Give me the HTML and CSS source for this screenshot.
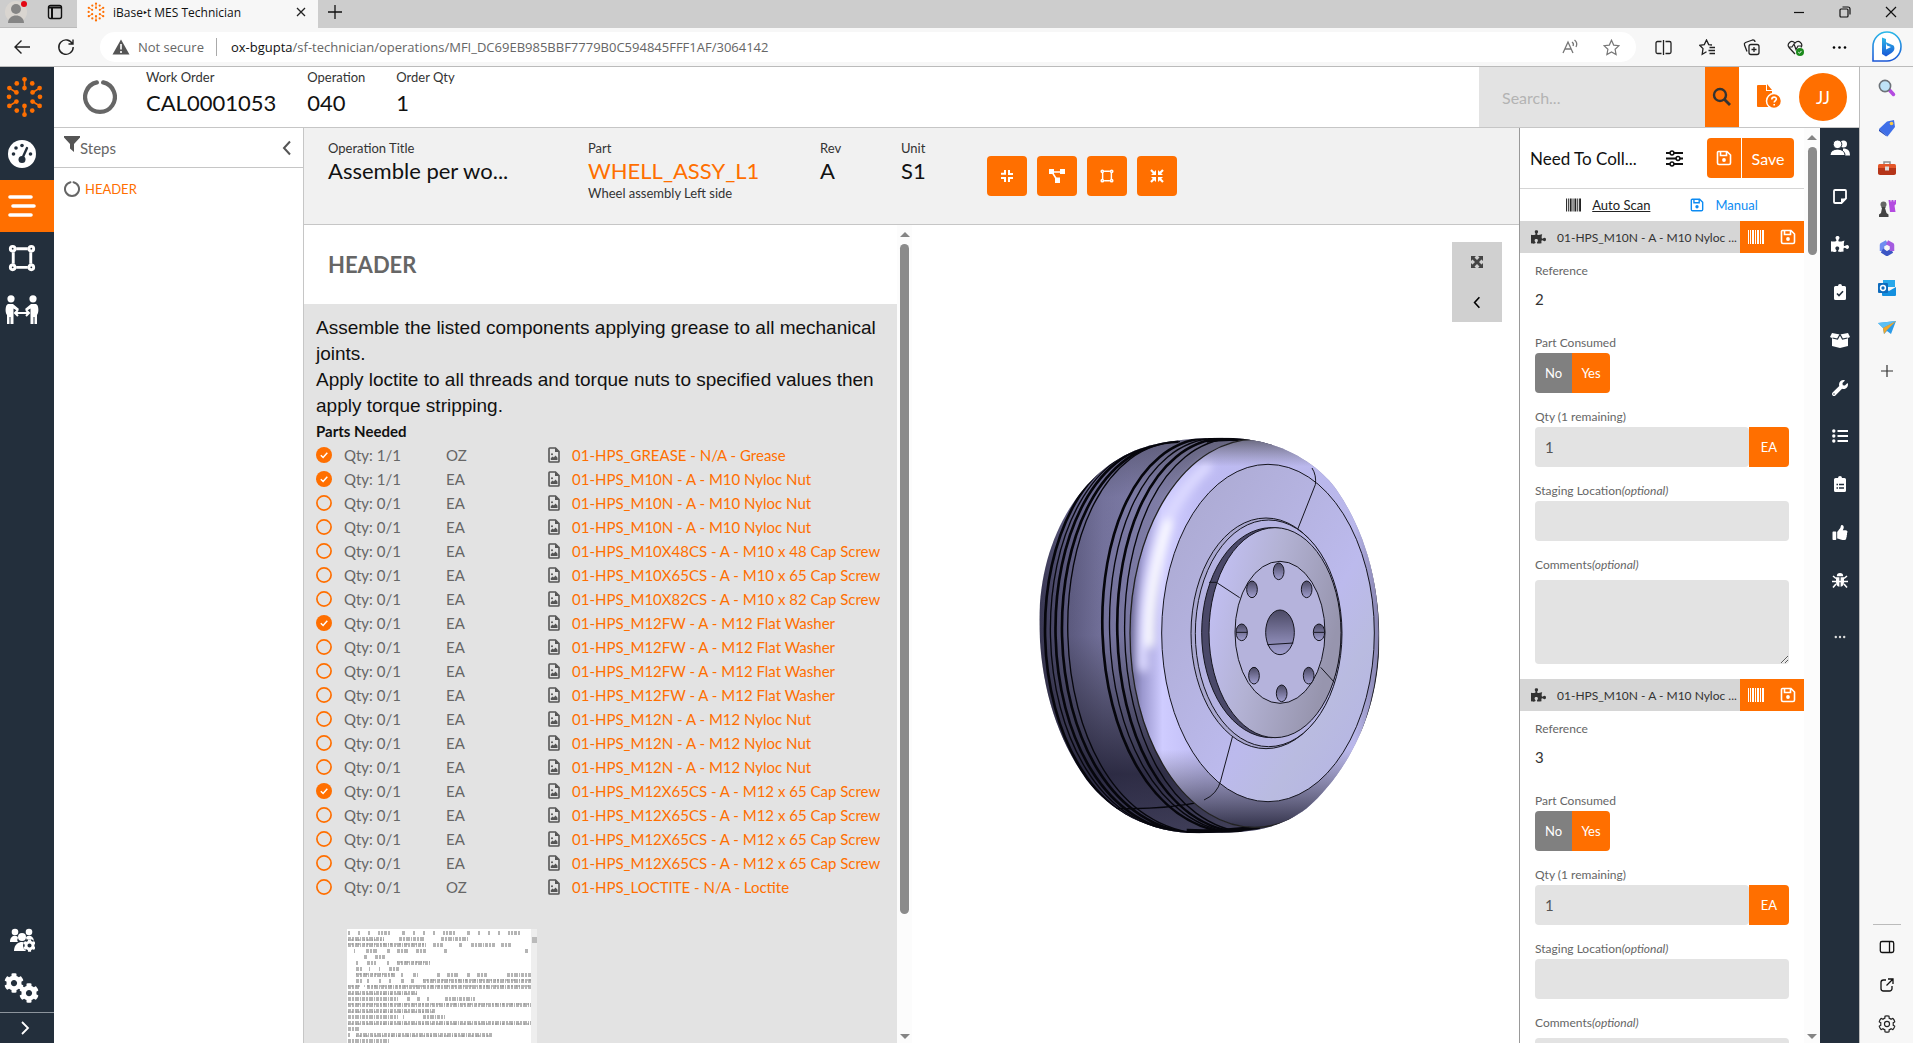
FILE: index.html
```html
<!DOCTYPE html>
<html lang="en">
<head>
<meta charset="utf-8">
<title>iBase-t MES Technician</title>
<link rel="stylesheet" href="styles.css">
</head>
<body>
<svg class="sprite" aria-hidden="true">
  <symbol id="logo" viewBox="17 26 110 125"><g stroke="#ff6f00" stroke-width="5" fill="#ff6f00"><path d="M72 36v26M72 115v26M27 62l21 13M117 62L96 75M27 115l21-13M117 115l-21-13"/><g stroke="none"><circle cx="72" cy="36" r="7"/><circle cx="72" cy="62" r="7"/><circle cx="72" cy="115" r="7"/><circle cx="72" cy="141" r="7"/><circle cx="27" cy="62" r="7"/><circle cx="48" cy="75" r="7"/><circle cx="117" cy="62" r="7"/><circle cx="96" cy="75" r="7"/><circle cx="27" cy="115" r="7"/><circle cx="48" cy="102" r="7"/><circle cx="117" cy="115" r="7"/><circle cx="96" cy="102" r="7"/><circle cx="49" cy="48" r="7"/><circle cx="95" cy="48" r="7"/><circle cx="49" cy="129" r="7"/><circle cx="95" cy="129" r="7"/><circle cx="26" cy="88" r="7"/><circle cx="118" cy="88" r="7"/></g></g></symbol>
  <symbol id="ring" viewBox="0 0 32 32"><path d="M13 2.300A14 14 0 1 0 19 2.300" fill="none" stroke="#666" stroke-width="4" stroke-linecap="round"/></symbol>
  <symbol id="gear" viewBox="0 0 512 512"><path fill="currentColor" d="M487.400 315.700l-42.600-24.600c4.300-23.200 4.300-47 0-70.200l42.600-24.600c4.900-2.800 7.100-8.600 5.500-14-11.100-35.600-30-67.800-54.700-94.600-3.800-4.100-10-5.100-14.800-2.300L380.800 110c-17.900-15.400-38.500-27.300-60.800-35.100V25.800c0-5.600-3.900-10.500-9.400-11.700-36.700-8.200-74.300-7.800-109.200 0-5.500 1.200-9.400 6.100-9.400 11.700V75c-22.200 7.900-42.800 19.800-60.800 35.100L88.700 85.500c-4.900-2.800-11-1.900-14.800 2.300-24.700 26.700-43.600 58.900-54.700 94.600-1.700 5.400.6 11.200 5.500 14L67.300 221c-4.300 23.200-4.300 47 0 70.200l-42.600 24.600c-4.900 2.800-7.100 8.600-5.500 14 11.100 35.600 30 67.800 54.700 94.600 3.800 4.100 10 5.100 14.800 2.300l42.600-24.600c17.900 15.400 38.500 27.300 60.800 35.100v49.200c0 5.600 3.900 10.500 9.400 11.700 36.700 8.200 74.300 7.800 109.200 0 5.500-1.200 9.400-6.100 9.400-11.700v-49.200c22.200-7.900 42.800-19.800 60.800-35.100l42.600 24.600c4.900 2.800 11 1.900 14.800-2.300 24.700-26.700 43.600-58.900 54.700-94.600 1.500-5.500-.7-11.300-5.600-14.100zM256 336c-44.100 0-80-35.900-80-80s35.900-80 80-80 80 35.900 80 80-35.900 80-80 80z"/></symbol>
  <symbol id="puzzle" viewBox="0 0 576 512"><path fill="currentColor" d="M519.442 288.651c-41.519 0-59.5 31.593-82.058 31.593C377.409 320.244 432 144 432 144s-196.288 80-196.288-3.297c0-35.827 36.288-46.25 36.288-85.985C272 19.216 243.885 0 210.539 0c-34.654 0-66.366 18.891-66.366 56.346 0 41.364 31.711 59.277 31.711 81.75C175.885 207.719 0 166.758 0 166.758v333.237s178.635 41.047 178.635-28.662c0-22.473-40-40.107-40-81.471 0-37.456 29.25-56.346 63.577-56.346 33.673 0 61.788 19.216 61.788 54.717 0 39.735-36.288 50.158-36.288 85.985 0 60.803 129.675 25.73 181.23 25.73 0 0-34.725-120.101 25.827-120.101 35.962 0 46.423 36.152 86.308 36.152C556.712 416 576 387.99 576 354.443c0-34.199-18.962-65.792-56.558-65.792z"/></symbol>
  <symbol id="frame" viewBox="0 0 24 24"><g fill="none" stroke="currentColor" stroke-width="2.500"><path d="M7 4h10M7 20h10M4.500 7v10M19.500 7v10"/><circle cx="4" cy="4" r="2"/><circle cx="20" cy="4" r="2"/><circle cx="4" cy="20" r="2"/><circle cx="20" cy="20" r="2"/></g></symbol>
  <symbol id="save" viewBox="0 0 16 16"><path d="M2.500 1.500h8.500L14.500 5v8a1.500 1.500 0 0 1-1.500 1.500H3A1.500 1.500 0 0 1 1.500 13V2.500a1 1 0 0 1 1-1zM4.500 2v3.500h6V2" fill="none" stroke="currentColor" stroke-width="1.600"/><circle cx="8" cy="10" r="1.900" fill="currentColor"/></symbol>
  <symbol id="barcode" viewBox="0 0 16 14"><path fill="currentColor" d="M0 0h1v14H0zM2 0h1v14H2zM4 0h2v14H4zM7 0h1v14H7zM9 0h2v14H9zM12 0h1v14h-1zM14 0h2v14h-2z"/></symbol>
  <symbol id="left" viewBox="0 0 10 16"><path d="M8 1.500L2 8l6 6.500" fill="none" stroke="currentColor" stroke-width="2"/></symbol>
  <symbol id="done" viewBox="0 0 16 16"><circle cx="8" cy="8" r="8" fill="#ff6f00"/><path d="M4.800 8.200l2.300 2.300 4.200-4.700" fill="none" stroke="#fff" stroke-width="1.500"/></symbol>
  <symbol id="open" viewBox="0 0 16 16"><circle cx="8" cy="8" r="7.100" fill="none" stroke="#ff6f00" stroke-width="1.700"/></symbol>
  <symbol id="file" viewBox="0 0 12 16"><path d="M1.800 1h5.700L11 4.500v9.700a.8.800 0 0 1-.8.800H1.800a.8.800 0 0 1-.8-.8V1.800A.8.800 0 0 1 1.800 1z" fill="none" stroke="#555" stroke-width="1.600"/><path d="M7 1v4h4zM2.800 13v-2l2-1.500 1 1L7.500 8.500l2 2.200V13z" fill="#555"/><circle cx="4" cy="7.200" r="1" fill="#555"/></symbol>
</svg>

<header class="tabs">
  <div class="tabs-left">
    <svg width="22" height="24" viewBox="0 0 22 24"><circle cx="11" cy="12" r="11" fill="#d9d5d0"/><circle cx="11" cy="9" r="5" fill="#858585"/><path d="M3 23c0-10 16-10 16 0z" fill="#858585"/><circle cx="19" cy="4" r="3" fill="#e30613"/></svg>
    <svg width="16" height="16" viewBox="0 0 16 16"><rect x="1.500" y="1.500" width="13" height="13" rx="2" fill="none" stroke="#111" stroke-width="1.400"/><path d="M1.500 3.500h13M5 4v11" stroke="#111" stroke-width="2"/></svg>
  </div>
  <div class="tab">
    <svg width="18" height="20"><use href="#logo"/></svg>
    <span class="tab-name">iBase‣t MES Technician</span>
    <svg width="10" height="10" viewBox="0 0 10 10"><path d="M1 1l8 8M9 1L1 9" stroke="#222" stroke-width="1.300"/></svg>
  </div>
  <button class="plain new-tab" aria-label="New tab"><svg width="14" height="14" viewBox="0 0 14 14"><path d="M7 0v14M0 7h14" stroke="#111" stroke-width="1.300"/></svg></button>
  <div class="window-buttons">
    <svg width="12" height="12" viewBox="0 0 12 12"><path d="M1 6.500h10" stroke="#111" stroke-width="1.200"/></svg>
    <svg width="12" height="12" viewBox="0 0 12 12"><path d="M1 4a1 1 0 0 1 1-1h6a1 1 0 0 1 1 1v6a1 1 0 0 1-1 1H2a1 1 0 0 1-1-1zM3.500 1H9a2 2 0 0 1 2 2v5.500" fill="none" stroke="#111" stroke-width="1.200"/></svg>
    <svg width="12" height="12" viewBox="0 0 12 12"><path d="M1 1l10 10M11 1L1 11" stroke="#111" stroke-width="1.200"/></svg>
  </div>
</header>

<div class="toolbar">
  <button class="plain" aria-label="Back"><svg width="18" height="16" viewBox="0 0 18 16"><path d="M17 8H2M8.500 1.500L2 8l6.500 6.500" fill="none" stroke="#222" stroke-width="1.400"/></svg></button>
  <button class="plain" aria-label="Reload"><svg width="18" height="18" viewBox="0 0 18 18"><path d="M15.500 6A7.200 7.200 0 1 0 16.200 9M16 1.500V6h-4.500" fill="none" stroke="#222" stroke-width="1.400"/></svg></button>
  <div class="address">
    <svg width="18" height="16" viewBox="0 0 18 16"><path d="M9 .5L17.500 15.500H.5z" fill="#555"/><path d="M9 5v5.500M9 12v2" stroke="#fff" stroke-width="1.600"/></svg>
    <span class="insecure">Not secure</span>
    <span class="url"><b>ox-bgupta</b>/sf-technician/operations/MFI_DC69EB985BBF7779B0C594845FFF1AF/3064142</span>
    <svg width="17" height="16" viewBox="0 0 17 16"><path d="M1 14L6 3l5 11M3 10h6M10 3c1.500 1 1.500 3 1 4M12.500 1c2.500 2 2.500 5 1.500 7" fill="none" stroke="#777" stroke-width="1.300"/></svg>
    <svg width="17" height="17" viewBox="0 0 17 17"><path d="M8.500 1.200l2.200 4.900 5.300.6-3.900 3.600 1 5.300-4.600-2.700-4.600 2.700 1-5.300L1 6.700l5.300-.6z" fill="none" stroke="#777" stroke-width="1.200"/></svg>
  </div>
  <div class="browser-icons">
    <svg width="17" height="17" viewBox="0 0 17 17"><path d="M6.500 2.500H2.500a1.500 1.500 0 0 0-1.500 1.500v9a1.500 1.500 0 0 0 1.500 1.500h4M10.500 2.500h4A1.500 1.500 0 0 1 16 4v9a1.500 1.500 0 0 1-1.500 1.500h-4M8.500 1v15" fill="none" stroke="#222" stroke-width="1.300"/></svg>
    <svg width="17" height="17" viewBox="0 0 17 17"><path d="M13 6l-3.300-.4L7.500 1 5.300 5.600.8 6.300 4 9.600l-.8 5.600 4.300-2.400M10.500 8.500H16M9.500 11.500H16M10.500 14.500H16" fill="none" stroke="#222" stroke-width="1.300"/></svg>
    <svg width="17" height="17" viewBox="0 0 17 17"><rect x="6" y="5.500" width="10" height="10" rx="2" fill="none" stroke="#222" stroke-width="1.300"/><path d="M11 8v5M8.500 10.500h5M4 12.500L1.500 6a2 2 0 0 1 1-2.500L9.500 1a2 2 0 0 1 2.500 2" fill="none" stroke="#222" stroke-width="1.300"/></svg>
    <svg width="17" height="17" viewBox="0 0 17 17"><path d="M8 15L2 8.500C-.5 5 4 0 8 4c4-4 8.500 1 6 4.500M2 8h3l2-3 2 5.500L11 7h4" fill="none" stroke="#222" stroke-width="1.200"/><circle cx="13" cy="13" r="4" fill="#1b8a1b"/><path d="M11.300 13.200l1.200 1 2-2.300" fill="none" stroke="#fff"/></svg>
    <svg width="17" height="17" viewBox="0 0 17 17"><circle cx="3" cy="8.500" r="1.300"/><circle cx="8.500" cy="8.500" r="1.300"/><circle cx="14" cy="8.500" r="1.300"/></svg>
  </div>
  <div class="bing"><svg width="32" height="32" viewBox="0 0 32 32"><defs><linearGradient id="bg" x2="0" y2="1"><stop offset="0" stop-color="#2bb8e8"/><stop offset="1" stop-color="#1a56d6"/></linearGradient></defs><path d="M2 30V15.500A14 14.500 0 1 1 16 30z" fill="#fff" stroke="url(#bg)" stroke-width="1.600"/><path d="M11 6.500l4 1.500v10.500l5-2.500-4-1.500-1.500-3.500 8 3.500c2 3 .5 6-2 7.500l-5.500 3.500-4-2.500z" fill="url(#bg)"/></svg></div>
</div>

<div class="stage">
  <div class="app">
    <nav class="rail" aria-label="Main">
      <a href="#" class="rail-logo" aria-label="Home"><svg width="37" height="42"><use href="#logo"/></svg></a>
      <a href="#" class="rail-link" aria-label="Dashboard"><svg width="28" height="28" viewBox="0 0 28 28"><circle cx="14" cy="14" r="14" fill="#fff"/><g fill="#232f3c"><circle cx="5.500" cy="14" r="1.800"/><circle cx="8" cy="8" r="1.800"/><circle cx="14" cy="5.500" r="1.800"/><circle cx="22.500" cy="14" r="1.800"/><circle cx="14" cy="19.500" r="3.500"/></g><path d="M14 19l5-11" stroke="#232f3c" stroke-width="2.400" stroke-linecap="round"/></svg></a>
      <a href="#" class="rail-link active" aria-label="Operations"><svg width="28" height="24" viewBox="0 0 28 24"><path d="M2 3h21M5 12h21M2 21h21" stroke="#fff" stroke-width="3.600" stroke-linecap="round"/></svg></a>
      <a href="#" class="rail-link" aria-label="Units"><svg width="28" height="28"><use href="#frame"/></svg></a>
      <a href="#" class="rail-link" aria-label="Handover"><svg width="34" height="30" viewBox="0 0 34 30" fill="#fff"><circle cx="6" cy="3.800" r="3.600"/><circle cx="28" cy="3.800" r="3.600"/><path d="M3 9h5l6 5-1.500 2-4-2.500V29H5.500v-7H4.500v7H2V20C0 18 0 10 3 9zM31 9h-5l-6 5 1.500 2 4-2.500V29h3v-7h1v7H32V20c2-2 2-10-1-11z"/><path d="M11 18h12M13 15l-3 3 3 3M21 15l3 3-3 3" fill="none" stroke="#fff" stroke-width="2"/></svg></a>
      <span class="grow"></span>
      <a href="#" class="rail-link rail-low" aria-label="Teams"><svg width="26" height="24" viewBox="0 0 26 24" fill="#fff"><circle cx="6" cy="4" r="3.300"/><circle cx="20" cy="4" r="3.300"/><circle cx="13" cy="9" r="4"/><path d="M1 14c0-8 8-7 8-4-1 1-1 3 0 4zM25 14c0-8-8-7-8-4 1 1 1 3 0 4z"/><path d="M5 23c0-11 12-10 12-7v7z"/><svg x="14" y="11" width="13" height="13"><circle cx="6.500" cy="6.500" r="6.500" fill="#232f3c"/><g color="#fff"><use href="#gear" width="13" height="13"/></g></svg></svg></a>
      <a href="#" class="rail-link rail-low" aria-label="Settings"><svg width="36" height="30" viewBox="0 0 36 30" color="#fff"><use href="#gear" width="20" height="20"/><use href="#gear" x="15" y="10" width="20" height="20"/></svg></a>
      <button class="plain rail-toggle" aria-label="Expand"><svg width="10" height="14" viewBox="0 0 10 14"><path d="M2 1l6 6-6 6" fill="none" stroke="#fff" stroke-width="1.800"/></svg></button>
    </nav>

    <div class="work">
      <header class="order">
        <svg class="order-state" width="34" height="34"><use href="#ring"/></svg>
        <dl class="facts order-facts">
          <div><dt>Work Order</dt><dd>CAL0001053</dd></div>
          <div><dt>Operation</dt><dd>040</dd></div>
          <div><dt>Order Qty</dt><dd>1</dd></div>
        </dl>
        <form class="search">
          <input type="search" placeholder="Search..." aria-label="Search">
          <button type="button" aria-label="Search"><svg width="20" height="20" viewBox="0 0 20 20"><circle cx="8" cy="8" r="6" fill="none" stroke="#333" stroke-width="2.400"/><path d="M12.500 12.500L18 18" stroke="#333" stroke-width="2.800"/></svg></button>
        </form>
        <a href="#" class="help" aria-label="Help"><svg width="26" height="26" viewBox="0 0 26 26"><path d="M2 1h8v6h6v15a1 1 0 0 1-1 1H2a1 1 0 0 1-1-1V2a1 1 0 0 1 1-1zM11 0l5 6h-5z" fill="#ff6f00"/><circle cx="18" cy="17" r="7.500" fill="#ff6f00" stroke="#fff" stroke-width="1.500"/><path d="M15.800 15.500c0-3.300 4.700-3 4.600-.4 0 1.500-2.200 1.500-2.200 3.400M18.200 20v1.500" fill="none" stroke="#fff" stroke-width="1.600"/></svg></a>
        <button class="avatar">JJ</button>
      </header>

      <div class="columns">
        <aside class="steps">
          <div class="steps-head">
            <svg width="16" height="16" viewBox="0 0 16 16"><path d="M0 0h16v1.500L10 8v8l-4-3.500V8L0 1.500z" fill="#555"/></svg>
            <span>Steps</span>
            <button class="plain" aria-label="Collapse"><svg width="10" height="18"><use href="#left"/></svg></button>
          </div>
          <a href="#" class="step"><svg width="16" height="16"><use href="#ring"/></svg>HEADER</a>
        </aside>

        <main class="operation">
          <div class="op-head">
            <dl class="facts op-facts">
              <div><dt>Operation Title</dt><dd>Assemble per wo...</dd></div>
              <div><dt>Part</dt><dd><a href="#">WHELL_ASSY_L1</a></dd><dd class="note">Wheel assembly Left side</dd></div>
              <div><dt>Rev</dt><dd>A</dd></div>
              <div><dt>Unit</dt><dd>S1</dd></div>
            </dl>
            <div class="actions">
              <button aria-label="Compress"><svg width="12" height="12" viewBox="0 0 12 12"><path d="M0 3.800h4V0M8 0v4h4M0 8h4v4M8 12V8h4" fill="none" stroke="#fff" stroke-width="2"/></svg></button>
              <button aria-label="Flow"><svg width="16" height="14" viewBox="0 0 16 14"><path d="M3 3h10M3 3l5 8" stroke="#fff" stroke-width="1.500"/><path d="M0 0h5v5H0zM11 0h5v5h-5zM6 8.500h5V14H6z" fill="#fff"/></svg></button>
              <button aria-label="Units"><svg width="14" height="14"><use href="#frame"/></svg></button>
              <button aria-label="Collapse all"><svg width="14" height="14" viewBox="0 0 14 14"><path d="M6 1v5H1zM8 1v5h5zM6 13V8H1zM8 13V8h5z" fill="#fff"/><path d="M1 1l4 4M13 1L9 5M1 13l4-4M13 13L9 9" stroke="#fff" stroke-width="2.200"/></svg></button>
            </div>
          </div>

          <div class="op-body">
            <section class="instructions">
              <h1>HEADER</h1>
              <div class="sheet">
                <p>Assemble the listed components applying grease to all mechanical joints.</p>
                <p>Apply loctite to all threads and torque nuts to specified values then apply torque stripping.</p>
                <table class="parts">
                  <caption>Parts Needed</caption>
                  <tbody>
                  <tr><td><svg><use href="#done"/></svg></td><td>Qty: 1/1</td><td>OZ</td><td><svg><use href="#file"/></svg></td><td><a href="#">01-HPS_GREASE - N/A - Grease</a></td></tr>
                  <tr><td><svg><use href="#done"/></svg></td><td>Qty: 1/1</td><td>EA</td><td><svg><use href="#file"/></svg></td><td><a href="#">01-HPS_M10N - A - M10 Nyloc Nut</a></td></tr>
                  <tr><td><svg><use href="#open"/></svg></td><td>Qty: 0/1</td><td>EA</td><td><svg><use href="#file"/></svg></td><td><a href="#">01-HPS_M10N - A - M10 Nyloc Nut</a></td></tr>
                  <tr><td><svg><use href="#open"/></svg></td><td>Qty: 0/1</td><td>EA</td><td><svg><use href="#file"/></svg></td><td><a href="#">01-HPS_M10N - A - M10 Nyloc Nut</a></td></tr>
                  <tr><td><svg><use href="#open"/></svg></td><td>Qty: 0/1</td><td>EA</td><td><svg><use href="#file"/></svg></td><td><a href="#">01-HPS_M10X48CS - A - M10 x 48 Cap Screw</a></td></tr>
                  <tr><td><svg><use href="#open"/></svg></td><td>Qty: 0/1</td><td>EA</td><td><svg><use href="#file"/></svg></td><td><a href="#">01-HPS_M10X65CS - A - M10 x 65 Cap Screw</a></td></tr>
                  <tr><td><svg><use href="#open"/></svg></td><td>Qty: 0/1</td><td>EA</td><td><svg><use href="#file"/></svg></td><td><a href="#">01-HPS_M10X82CS - A - M10 x 82 Cap Screw</a></td></tr>
                  <tr><td><svg><use href="#done"/></svg></td><td>Qty: 0/1</td><td>EA</td><td><svg><use href="#file"/></svg></td><td><a href="#">01-HPS_M12FW - A - M12 Flat Washer</a></td></tr>
                  <tr><td><svg><use href="#open"/></svg></td><td>Qty: 0/1</td><td>EA</td><td><svg><use href="#file"/></svg></td><td><a href="#">01-HPS_M12FW - A - M12 Flat Washer</a></td></tr>
                  <tr><td><svg><use href="#open"/></svg></td><td>Qty: 0/1</td><td>EA</td><td><svg><use href="#file"/></svg></td><td><a href="#">01-HPS_M12FW - A - M12 Flat Washer</a></td></tr>
                  <tr><td><svg><use href="#open"/></svg></td><td>Qty: 0/1</td><td>EA</td><td><svg><use href="#file"/></svg></td><td><a href="#">01-HPS_M12FW - A - M12 Flat Washer</a></td></tr>
                  <tr><td><svg><use href="#open"/></svg></td><td>Qty: 0/1</td><td>EA</td><td><svg><use href="#file"/></svg></td><td><a href="#">01-HPS_M12N - A - M12 Nyloc Nut</a></td></tr>
                  <tr><td><svg><use href="#open"/></svg></td><td>Qty: 0/1</td><td>EA</td><td><svg><use href="#file"/></svg></td><td><a href="#">01-HPS_M12N - A - M12 Nyloc Nut</a></td></tr>
                  <tr><td><svg><use href="#open"/></svg></td><td>Qty: 0/1</td><td>EA</td><td><svg><use href="#file"/></svg></td><td><a href="#">01-HPS_M12N - A - M12 Nyloc Nut</a></td></tr>
                  <tr><td><svg><use href="#done"/></svg></td><td>Qty: 0/1</td><td>EA</td><td><svg><use href="#file"/></svg></td><td><a href="#">01-HPS_M12X65CS - A - M12 x 65 Cap Screw</a></td></tr>
                  <tr><td><svg><use href="#open"/></svg></td><td>Qty: 0/1</td><td>EA</td><td><svg><use href="#file"/></svg></td><td><a href="#">01-HPS_M12X65CS - A - M12 x 65 Cap Screw</a></td></tr>
                  <tr><td><svg><use href="#open"/></svg></td><td>Qty: 0/1</td><td>EA</td><td><svg><use href="#file"/></svg></td><td><a href="#">01-HPS_M12X65CS - A - M12 x 65 Cap Screw</a></td></tr>
                  <tr><td><svg><use href="#open"/></svg></td><td>Qty: 0/1</td><td>EA</td><td><svg><use href="#file"/></svg></td><td><a href="#">01-HPS_M12X65CS - A - M12 x 65 Cap Screw</a></td></tr>
                  <tr><td><svg><use href="#open"/></svg></td><td>Qty: 0/1</td><td>OZ</td><td><svg><use href="#file"/></svg></td><td><a href="#">01-HPS_LOCTITE - N/A - Loctite</a></td></tr>
                  </tbody>
                </table>
                <svg class="thumb" width="190" height="200" viewBox="0 0 190 200" role="img" aria-label="Attachment preview">
                  <rect width="190" height="200" fill="#fff"/><rect x="184" width="6" height="200" fill="#eee"/><rect x="185" y="8" width="5" height="6" fill="#bbb"/>
                  <g fill="none" stroke="#b4b4b4" stroke-width="4">
                    <path stroke-dasharray="2 8 2 8 2 8 2 1 2 1 3 1 2 12 3 8" d="M1 4h182"/>
                    <path stroke-dasharray="3 1 2 1 4 1 1 1" d="M1 10h36M52 10h26M94 10h28M1 16h78M86 16h10M112 16h4M124 16h24M154 16h10M7 22h1M19 22h12M40 22h3M50 22h11M69 22h10M97 22h4M178 22h4M17 28h3M28 28h10M9 34h2M20 34h9M40 34h2M50 34h33M9 40h6M22 40h1M32 40h1M42 40h10M9 46h40M54 46h2M66 46h5M90 46h3M100 46h12M120 46h3M130 46h10M160 46h24M9 52h6M20 52h2M32 52h2M42 52h2M54 52h3M64 52h3M76 52h108M1 58h11M20 58h164M1 64h70M1 70h50M60 70h4M70 70h3M80 70h2M98 70h30M1 76h183M1 82h88M1 88h50M56 88h1M76 88h22M1 94h183M1 100h12M1 106h2M9 106h136M1 112h41M1 118h72M1 124h183"/>
                  </g>
                  <path stroke="#8c8c8c" stroke-dasharray="1 2 2 3 1 1 2 4" d="M1 57h183M1 65h70M1 75h183M1 83h88M1 95h183M9 107h136M1 117h70M1 125h183M1 11h36M1 15h78M50 33h33M9 45h40M76 51h108"/>
                </svg>
              </div>
            </section>
            <div class="bar"><i class="up"></i><i class="handle"></i><i class="down"></i></div>
            <section class="viewer">
              <div class="viewer-tools">
                <button class="plain" aria-label="Fit"><svg width="12" height="12" viewBox="0 0 12 12"><path d="M0 0h5L3.500 1.500 6 4l2.500-2.500L7 0h5v5l-1.500-1.500L8 6l2.500 2.500L12 7v5H7l1.500-1.500L6 8l-2.500 2.500L5 12H0V7l1.500 1.500L4 6 1.500 3.500 0 5z" fill="#444"/></svg></button>
                <button class="plain" aria-label="Show tools"><svg width="8" height="13"><use href="#left"/></svg></button>
              </div>
              <svg class="wheel" viewBox="0 0 1260 1380" role="img" aria-label="Wheel assembly model">
                <defs>
                  <linearGradient id="tyre" x1="118" x2="760" y1="0" y2="0" gradientUnits="userSpaceOnUse"><stop offset="0" stop-color="#3a3856"/><stop offset=".12" stop-color="#5f5d84"/><stop offset=".3" stop-color="#7b79a6"/><stop offset=".42" stop-color="#8280ae"/><stop offset="1" stop-color="#9492b8"/></linearGradient>
                  <linearGradient id="shade" x2="0" y2="1"><stop offset="0" stop-color="#111" stop-opacity=".35"/><stop offset=".15" stop-color="#222" stop-opacity=".08"/><stop offset=".5" stop-color="#111" stop-opacity=".08"/><stop offset=".85" stop-color="#0d0c1c" stop-opacity=".72"/><stop offset="1" stop-color="#0d0c1c" stop-opacity=".6"/></linearGradient>
                  <linearGradient id="rim"><stop offset="0" stop-color="#67658f"/><stop offset=".05" stop-color="#9b98cf"/><stop offset=".13" stop-color="#cfccff"/><stop offset=".3" stop-color="#bebbf3"/><stop offset=".9" stop-color="#b9b7ea"/><stop offset="1" stop-color="#8582ae"/></linearGradient>
                  <linearGradient id="rimshade" x2="0" y2="1"><stop offset="0" stop-color="#333" stop-opacity=".6"/><stop offset=".07" stop-color="#555" stop-opacity="0"/><stop offset=".8" stop-color="#333" stop-opacity="0"/><stop offset="1" stop-color="#111122" stop-opacity=".8"/></linearGradient>
                  <linearGradient id="face" x2="1" y2="1"><stop offset="0" stop-color="#a9a7ce"/><stop offset=".35" stop-color="#b4b2df"/><stop offset=".6" stop-color="#bcbaed"/><stop offset=".75" stop-color="#b9bbe0"/><stop offset="1" stop-color="#b4b2e6"/></linearGradient>
                  <linearGradient id="disc" x2="1" y2=".4"><stop offset="0" stop-color="#c6c3fb"/><stop offset=".5" stop-color="#b3b2d4"/><stop offset="1" stop-color="#9795ae"/></linearGradient>
                  <linearGradient id="hole" x2="0" y2="1"><stop offset="0" stop-color="#4b4964"/><stop offset="1" stop-color="#a19fd0"/></linearGradient>
                  <filter id="soft" filterUnits="userSpaceOnUse" x="0" y="0" width="1260" height="1380"><feGaussianBlur stdDeviation="13"/></filter>
                  <clipPath id="body"><path d="M118 660C118 420 240 210 420 146C500 118 600 113 680 113C850 116 960 200 1010 270C1100 400 1138 560 1138 720C1138 940 1040 1120 920 1225C860 1270 800 1290 720 1296L600 1300C440 1300 330 1230 260 1140C160 1000 118 830 118 660z"/></clipPath>
                </defs>
                <g clip-path="url(#body)">
                  <path fill="url(#tyre)" d="M0 0h1260v1380H0z"/>
                  <path fill="url(#shade)" d="M118 113h700v1187H118z"/>
                  <g fill="none" stroke="#06060c">
                    <g stroke-width="8"><path d="M510 125C2 135 2 1280 560 1302M520 125C42 135 36 1280 580 1302M535 125C62 135 56 1280 600 1302"/></g>
                    <g stroke-width="4"><path d="M515 125C22 135 20 1280 570 1302M540 125C82 135 76 1280 615 1302"/></g>
                    <g stroke-width="8"><path d="M620 114C190 140 190 1260 700 1300M670 114C238 140 234 1260 730 1300"/></g>
                    <g stroke-width="4"><path d="M645 114C212 140 212 1260 715 1300M700 114C260 140 254 1260 750 1300M340 1225q140 6 270-20"/></g>
                    <path stroke-width="12" d="M620 122q90-14 200 10M560 1292q100 6 220-12"/>
                  </g>
                  <ellipse cx="764" cy="700" rx="374" ry="582" fill="url(#rim)"/>
                  <g fill="none" stroke="#fff" stroke-linecap="round" filter="url(#soft)"><path stroke="#dcd9ff" d="M620 200C470 330 420 560 430 800" stroke-width="34"/><path d="M505 370C465 500 448 610 450 730" stroke-width="26"/></g>
                  <ellipse cx="764" cy="700" rx="374" ry="582" fill="url(#rimshade)" stroke="#222" stroke-width="4"/>
                </g>
                <g stroke="#15151f" stroke-width="3" fill="none">
                  <ellipse cx="804" cy="699" rx="319" ry="506" fill="url(#face)"/>
                  <path d="M936 204q14 22 10 50L893 388M698 1008l-36 134q-10 40-50 58"/>
                  <ellipse cx="798" cy="700" rx="225" ry="346" fill="#a9a7cf"/>
                  <ellipse cx="806" cy="700" rx="220" ry="340" fill="#b5b3e2"/>
                  <ellipse cx="814" cy="698" rx="209" ry="315" fill="#4a4868"/>
                  <ellipse cx="825" cy="698" rx="198" ry="315" fill="url(#disc)"/>
                  <path d="M627 547h22l70 46M962 802l42 46"/>
                  <ellipse cx="840" cy="697" rx="135" ry="213" fill="#b5b3dc"/>
                  <g fill="url(#hole)"><ellipse cx="840" cy="697" rx="43" ry="67"/><ellipse cx="836" cy="514" rx="16" ry="25"/><ellipse cx="756" cy="568" rx="16" ry="25"/><ellipse cx="920" cy="568" rx="16" ry="25"/><ellipse cx="725" cy="697" rx="17" ry="25"/><ellipse cx="957" cy="697" rx="17" ry="25"/><ellipse cx="762" cy="827" rx="16" ry="25"/><ellipse cx="926" cy="827" rx="16" ry="25"/><ellipse cx="845" cy="880" rx="16" ry="25"/></g>
                  <path d="M802 734l78-5M708 697h34M941 697h33"/>
                </g>
              </svg>
            </section>
          </div>
        </main>

        <aside class="collect">
          <div class="collect-body">
            <div class="collect-head">
              <h2>Need To Coll...</h2>
              <svg width="17" height="17" viewBox="0 0 17 17"><path d="M0 3h17M0 8.500h17M0 14h17" stroke="#111" stroke-width="1.800"/><g fill="#fff" stroke="#111" stroke-width="1.500"><circle cx="6" cy="3" r="1.900"/><circle cx="12" cy="8.500" r="1.900"/><circle cx="6" cy="14" r="1.900"/></g></svg>
              <div class="save"><button aria-label="Save options"><svg width="16" height="16"><use href="#save"/></svg></button><button>Save</button></div>
            </div>
            <div class="modes">
              <a href="#" class="on"><svg width="15" height="14"><use href="#barcode"/></svg><span>Auto Scan</span></a>
              <a href="#"><svg width="14" height="14"><use href="#save"/></svg><span>Manual</span></a>
            </div>

            <section class="entry">
              <div class="entry-head"><svg width="15" height="14"><use href="#puzzle"/></svg><h3>01-HPS_M10N - A - M10 Nyloc ...</h3><button aria-label="Scan"><svg width="16" height="14"><use href="#barcode"/></svg></button><button aria-label="Save entry"><svg width="16" height="16"><use href="#save"/></svg></button></div>
              <div class="fields">
                <div class="field reference"><span class="label">Reference</span><span class="value">2</span></div>
                <div class="field"><span class="label">Part Consumed</span><div class="toggle"><button>No</button><button class="on">Yes</button></div></div>
                <div class="field"><label for="qty2">Qty (1 remaining)</label><div class="qty"><input id="qty2" value="1"><span>EA</span></div></div>
                <div class="field"><label for="loc2">Staging Location<i>(optional)</i></label><input id="loc2"></div>
                <div class="field comments"><label for="com2">Comments<i>(optional)</i></label><textarea id="com2"></textarea></div>
              </div>
            </section>

            <section class="entry">
              <div class="entry-head"><svg width="15" height="14"><use href="#puzzle"/></svg><h3>01-HPS_M10N - A - M10 Nyloc ...</h3><button aria-label="Scan"><svg width="16" height="14"><use href="#barcode"/></svg></button><button aria-label="Save entry"><svg width="16" height="16"><use href="#save"/></svg></button></div>
              <div class="fields">
                <div class="field reference"><span class="label">Reference</span><span class="value">3</span></div>
                <div class="field"><span class="label">Part Consumed</span><div class="toggle"><button>No</button><button class="on">Yes</button></div></div>
                <div class="field"><label for="qty3">Qty (1 remaining)</label><div class="qty"><input id="qty3" value="1"><span>EA</span></div></div>
                <div class="field"><label for="loc3">Staging Location<i>(optional)</i></label><input id="loc3"></div>
                <div class="field comments"><label for="com3">Comments<i>(optional)</i></label><textarea id="com3"></textarea></div>
              </div>
            </section>
          </div>
          <div class="bar bar-short"><i class="up"></i><i class="handle"></i><i class="down"></i></div>
        </aside>

        <nav class="tools" aria-label="Tools">
          <a href="#" aria-label="People"><svg width="20" height="16" viewBox="0 0 20 16" fill="#fff"><circle cx="13.500" cy="4" r="3.500"/><path d="M13 8.500c5 0 7 2.500 7 7h-7z"/><circle cx="7.500" cy="4.300" r="4.300" stroke="#232f3c"/><path d="M0 15.500c0-8.500 15-8.500 15 0z" stroke="#232f3c"/></svg></a>
          <a href="#" aria-label="Notes"><svg width="14" height="15" viewBox="0 0 14 15"><path d="M1 2a1 1 0 0 1 1-1h10a1 1 0 0 1 1 1v7.500L8.500 14H2a1 1 0 0 1-1-1z" fill="none" stroke="#fff" stroke-width="1.800"/><path d="M8 14.500V9.500h5.500z" fill="#fff"/></svg></a>
          <a href="#" aria-label="Parts"><svg width="18" height="16"><use href="#puzzle"/></svg></a>
          <a href="#" aria-label="Tasks"><svg width="12" height="16" viewBox="0 0 12 16"><path d="M1.500 2H4a2 2 0 0 1 4 0h2.500A1.500 1.500 0 0 1 12 3.500v11a1.500 1.500 0 0 1-1.500 1.500h-9A1.500 1.500 0 0 1 0 14.500v-11A1.500 1.500 0 0 1 1.500 2z" fill="#fff"/><path d="M3 9.500l2 2L9 7.300" fill="none" stroke="#232f3c" stroke-width="1.600"/></svg></a>
          <a href="#" aria-label="Kits"><svg width="20" height="15" viewBox="0 0 20 15"><path d="M2 0l8 1.500L18 0l2 4-2 1v8l-8 2-8-2V5L0 4z" fill="#fff"/><path d="M2.500 5l5 1L10 1.500 12.500 6l5-1" fill="none" stroke="#232f3c" stroke-width="1.200"/></svg></a>
          <a href="#" aria-label="Tooling"><svg width="16" height="16" viewBox="0 0 512 512"><path fill="#fff" d="M507.730 109.100c-2.240-9.030-13.540-12.090-20.120-5.510l-74.360 74.360-67.880-11.310-11.310-67.880 74.360-74.360c6.620-6.620 3.430-17.900-5.660-20.160-47.380-11.740-99.550.91-136.580 37.930-39.640 39.640-50.550 97.100-34.050 147.200L18.740 402.760c-24.990 24.990-24.990 65.510 0 90.500 24.990 24.990 65.510 24.990 90.500 0l213.210-213.210c50.120 16.710 107.470 5.680 147.370-34.220 37.070-37.070 49.700-89.320 37.910-136.730zM64 472c-13.250 0-24-10.750-24-24 0-13.260 10.750-24 24-24s24 10.740 24 24c0 13.250-10.750 24-24 24z"/></svg></a>
          <a href="#" aria-label="List"><svg width="16" height="14" viewBox="0 0 16 14"><path d="M5.500 2H16M5.500 7H16M5.500 12H16" stroke="#fff" stroke-width="1.800"/><g fill="#fff"><circle cx="1.800" cy="2" r="1.700"/><circle cx="1.800" cy="7" r="1.700"/><circle cx="1.800" cy="12" r="1.700"/></g></svg></a>
          <a href="#" aria-label="Checklist"><svg width="12" height="16" viewBox="0 0 12 16"><path d="M1.500 2H4a2 2 0 0 1 4 0h2.500A1.500 1.500 0 0 1 12 3.500v11a1.500 1.500 0 0 1-1.500 1.500h-9A1.500 1.500 0 0 1 0 14.500v-11A1.500 1.500 0 0 1 1.500 2z" fill="#fff"/><path d="M2.500 8.500H4M5 8.500h5M2.500 12H4M5 12h5" stroke="#232f3c" stroke-width="1.300"/></svg></a>
          <a href="#" aria-label="Approve"><svg width="16" height="15" viewBox="0 0 512 512"><path fill="#fff" d="M104 224H24c-13.255 0-24 10.745-24 24v240c0 13.255 10.745 24 24 24h80c13.255 0 24-10.745 24-24V248c0-13.255-10.745-24-24-24zM384 81.452c0 42.416-25.970 66.208-33.277 94.548h101.723c33.397 0 59.397 27.746 59.553 58.098.084 17.938-7.546 37.249-19.439 49.197l-.11.11c9.836 23.337 8.237 56.037-9.308 79.469 8.681 25.895-.069 57.704-16.382 74.757 4.298 17.598 2.244 32.575-6.148 44.632C440.202 511.587 389.616 512 346.839 512l-2.845-.001c-48.287-.017-87.806-17.598-119.560-31.725-15.957-7.099-36.821-15.887-52.651-16.178-6.540-.12-11.783-5.457-11.783-11.998v-213.770c0-3.200 1.282-6.271 3.558-8.521 39.614-39.144 56.648-80.587 89.117-113.111 14.804-14.832 20.188-37.236 25.393-58.902C282.515 39.293 291.817 0 312 0c24 0 72 8 72 81.452z"/></svg></a>
          <a href="#" aria-label="Defects"><svg width="16" height="16" viewBox="0 0 16 16"><path d="M4.800 4.300a3.200 3.200 0 0 1 6.400 0zM4 5.300h3.400v9.500C5 14.300 4 12.500 4 10zM12 5.300H8.600v9.500c2.400-.5 3.400-2.300 3.400-4.800z" fill="#fff"/><path d="M4 6.500L1 4M12 6.500L15 4M0 9.500h16M4 12l-3 3.500M12 12l3 3.500" stroke="#fff" stroke-width="1.600"/></svg></a>
          <a href="#" aria-label="More"><svg width="12" height="4" viewBox="0 0 12 4" fill="#ddd"><circle cx="1.800" cy="2" r="1.200"/><circle cx="6" cy="2" r="1.200"/><circle cx="10.200" cy="2" r="1.200"/></svg></a>
        </nav>
      </div>
    </div>
  </div>

  <aside class="edge">
    <svg width="18" height="18" viewBox="0 0 18 18"><path d="M10.500 10l5 5.500" stroke="#b44be0" stroke-width="3.500" stroke-linecap="round"/><circle cx="7" cy="7" r="5.600" fill="#bfe3f7" stroke="#6c7278" stroke-width="1.600"/></svg>
    <svg width="18" height="18" viewBox="0 0 18 18"><path d="M9 2.500L16 1l1 7-7.500 9.500L1 10z" fill="#3f6fe8"/><path d="M1 10l8.500 7.500L8 17 1 12z" fill="#1e45b8"/><circle cx="13.500" cy="4.500" r="1.800" fill="#f7c948"/></svg>
    <svg width="18" height="18" viewBox="0 0 18 18"><path d="M6 5V3h6v2" fill="none" stroke="#8f8f8f" stroke-width="1.500"/><rect y="5" width="18" height="10" rx="1.500" fill="#e4572a"/><path d="M0 9h18v5a2 2 0 0 1-2 2H2a2 2 0 0 1-2-2z" fill="#b53519"/><rect x="7" y="7.500" width="4" height="4" fill="#ddd"/></svg>
    <svg width="18" height="18" viewBox="0 0 18 18"><path d="M10.500 1h2v1.500h1V1h2v1.500h1V1H18v4l-1.500 1.500L17.500 13H12z" fill="#b44be0"/><circle cx="5.500" cy="5.500" r="3" fill="#666"/><path d="M3 8h5l-1 1 1.500 5 2 1.500V18H1v-2.500L3 14l1-5z" fill="#444"/></svg>
    <svg width="18" height="18" viewBox="0 0 18 18" fill="none" stroke-width="4.500" stroke-linejoin="round"><path d="M9 3.200L4 6v6" stroke="#6f8df0"/><path d="M4 11.500l5 3.300 5-3" stroke="#3c56c4"/><path d="M14 12V6L9 3.200" stroke="#a45be0"/></svg>
    <svg width="18" height="18" viewBox="0 0 18 18"><path d="M5 1h12v7H5z" fill="#28a8ea"/><path d="M4 8l7 4 7-4v8a1 1 0 0 1-1 1H5a1 1 0 0 1-1-1z" fill="#1490df"/><rect y="4" width="10" height="10" rx="1" fill="#0f6cbd"/><circle cx="5" cy="9" r="2.400" fill="none" stroke="#fff" stroke-width="1.500"/></svg>
    <svg width="18" height="18" viewBox="0 0 18 18"><path d="M0 4l18-2-5 13-4-3-3 3-1-6z" fill="#2b9be8"/><path d="M0 4l18-2L5 9z" fill="#5cc0f5"/><path d="M5 9l13-7-9 9-3 4z" fill="#f0a72c"/></svg>
    <svg class="plus" width="14" height="14" viewBox="0 0 14 14"><path d="M7 1v12M1 7h12" stroke="#333" stroke-width="1.200"/></svg>
    <span class="grow"></span>
    <hr>
    <svg width="16" height="16" viewBox="0 0 16 16"><path d="M3 2.500h10A1.700 1.700 0 0 1 14.700 4.200v7.600A1.700 1.700 0 0 1 13 13.500H3a1.700 1.700 0 0 1-1.700-1.700V4.200A1.700 1.700 0 0 1 3 2.500zM10.500 3v10" fill="none" stroke="#111" stroke-width="1.300"/></svg>
    <svg width="16" height="16" viewBox="0 0 16 16"><path d="M7 3H4.500A2.500 2.500 0 0 0 2 5.500v6A2.500 2.500 0 0 0 4.500 14h6a2.500 2.500 0 0 0 2.500-2.500V9M9 2h5v5M14 2L7.500 8.500" fill="none" stroke="#111" stroke-width="1.300"/></svg>
    <svg width="18" height="18" viewBox="-20 -20 552 552"><path fill="none" stroke="#222" stroke-width="36" d="M487 316l-42-25c4-23 4-47 0-70l42-25c5-3 7-9 6-14-11-36-30-68-55-95-4-4-10-5-15-2l-42 25c-18-15-39-27-61-35V26c0-6-4-11-9-12-37-8-74-8-110 0-5 1-9 6-9 12v49c-22 8-43 20-61 35L89 86c-5-3-11-2-15 2-25 27-44 59-55 95-1 5 1 11 6 14l42 24c-4 23-4 47 0 70l-42 25c-5 3-7 9-6 14 11 36 30 68 55 95 4 4 10 5 15 2l42-25c18 15 39 27 61 35v49c0 6 4 11 9 12 37 8 74 8 110 0 5-1 9-6 9-12v-49c22-8 43-20 61-35l42 25c5 3 11 2 15-2 25-27 44-59 55-95 1-5-1-11-6-14z"/><circle cx="256" cy="256" r="78" fill="none" stroke="#222" stroke-width="36"/></svg>
  </aside>
</div>
</body>
</html>
```
FILE: styles.css
```css
* { box-sizing: border-box; }
:root { --orange: #ff6f00; --navy: #232f3c; --line: #c6c6c6; }
html, body { height: 100%; }
body { margin: 0; display: flex; flex-direction: column; overflow: hidden; background: #fff; color: #111; font-family: Lato, "Liberation Sans", sans-serif; font-size: 16px; }
a { color: var(--orange); text-decoration: none; }
svg { flex: none; display: block; }
button, input, textarea { font: inherit; border: 0; margin: 0; padding: 0; }
h1, h2, h3, p, dl, dd { margin: 0; }
.sprite { position: absolute; width: 0; height: 0; }
.plain { background: none; display: flex; align-items: center; justify-content: center; }
.grow { flex: 1; }

.tabs { flex: none; display: flex; height: 28px; background: #cdcdcd; font-family: "Open Sans", sans-serif; font-size: 12px; }
.tabs-left { width: 77px; display: flex; align-items: center; justify-content: space-between; padding: 0 14px 4px 5px; border-bottom: 1px solid #bbb; }
.tab { width: 241px; display: flex; align-items: center; gap: 8px; padding: 0 12px 4px 10px; background: #f7f7f7; }
.tab-name { flex: 1; }
.new-tab { width: 34px; padding-bottom: 4px; }
.window-buttons { margin-left: auto; display: flex; align-items: center; gap: 34px; padding: 0 16px 4px; }

.toolbar { flex: none; display: flex; align-items: center; height: 39px; background: #f7f7f7; border-bottom: 1px solid #bbb; font-family: "Open Sans", sans-serif; font-size: 13px; padding-left: 12px; }
.toolbar > .plain { width: 20px; margin-right: 24px; }
.address { flex: 1; display: flex; align-items: center; gap: 24px; height: 30px; border-radius: 15px; background: #fff; padding: 0 16px 0 12px; color: #666; }
.address svg:first-child { margin-right: -16px; }
.insecure { padding-right: 12px; border-right: 1px solid #aaa; white-space: nowrap; }
.url { flex: 1; margin-left: -10px; white-space: nowrap; overflow: hidden; }
.url b { font-weight: 400; color: #111; }
.browser-icons { display: flex; gap: 27px; padding: 0 12px 0 19px; }
.bing { width: 53px; display: flex; justify-content: center; }

.stage { flex: 1; min-height: 0; display: flex; }
.app { flex: 1; min-width: 0; display: flex; border-right: 1px solid #bbb; }
.rail { width: 54px; display: flex; flex-direction: column; background: var(--navy); }
.rail a { display: flex; justify-content: center; align-items: center; padding-right: 10px; color: #fff; }
.rail .rail-logo { height: 60px; padding-right: 6px; }
.rail-link { height: 52px; }
.rail-link.active { background: var(--orange); }
.rail-logo + .rail-link { height: 53px; }
.rail-link.rail-low { height: 48px; }
.rail-toggle { height: 31px; padding-right: 4px; border-top: 1px solid #8c949c; }

.work { flex: 1; min-width: 0; display: flex; flex-direction: column; }
.order { flex: none; height: 61px; display: flex; align-items: center; border-bottom: 1px solid var(--line); }
.order-state { margin: 0 29px; }
.facts { display: flex; }
.facts dt { font-size: 13px; line-height: 20px; color: #333; }
.facts dd { font-size: 22px; line-height: 26px; white-space: nowrap; }
.facts .note { font-size: 13px; line-height: 18px; color: #333; }
.order-facts { gap: 31px; flex: 1; align-self: flex-start; }
.order-facts dd { padding-top: 3px; }
.search { display: flex; align-self: stretch; width: 260px; }
.search input { flex: 1; min-width: 0; background: #e3e3e3; padding-left: 23px; color: #333; outline: 0; }
.search input::placeholder { color: #b3b3b3; opacity: 1; }
.search button { width: 34px; display: grid; place-items: center; background: var(--orange); }
.help { margin: 0 17px; }
.avatar { width: 48px; height: 48px; border-radius: 50%; background: var(--orange); color: #fff; margin-right: 12px; font-size: 17px; }

.columns { flex: 1; min-height: 0; display: flex; }
.steps { width: 250px; border-right: 1px solid var(--line); }
.steps-head { display: flex; align-items: center; height: 40px; padding: 0 11px 0 10px; border-bottom: 1px solid var(--line); color: #666; font-size: 15px; }
.steps-head svg { margin-bottom: 8px; }
.steps-head span { flex: 1; }
.steps-head .plain svg { margin: 0; }
.steps-head .plain { color: #555; }
.step { display: flex; align-items: center; gap: 5px; height: 20px; margin: 11px 10px; font-size: 13px; }

.operation { flex: 1; min-width: 0; display: flex; flex-direction: column; }
.op-head { flex: none; height: 97px; display: flex; align-items: flex-start; background: #f1f1f1; border-bottom: 1px solid var(--line); padding: 10px 24px 0; }
.op-facts { display: grid; grid-template-columns: 260px 232px 81px 86px; }
.actions { display: flex; gap: 10px; padding-top: 18px; }
.actions button { width: 40px; height: 40px; border-radius: 4px; background: var(--orange); color: #fff; display: grid; place-items: center; }
.op-body { flex: 1; min-height: 0; display: flex; }
.instructions { width: 593px; overflow: auto; scrollbar-width: none; background: #e3e3e3; }
.instructions h1 { height: 79px; line-height: 80px; padding-left: 24px; font-size: 22px; font-weight: 700; color: #666; background: #fff; }
.sheet { padding: 11px 12px 0; }
.sheet p { font-family: "Liberation Sans", Arial, sans-serif; font-size: 19px; line-height: 26px; }
.parts { border-collapse: collapse; table-layout: fixed; width: 100%; font-size: 15px; color: #666; }
.parts caption { text-align: left; font-size: 15px; font-weight: 700; color: #111; height: 24px; line-height: 24px; }
.parts td { padding: 0; height: 24px; white-space: nowrap; }
.parts td:nth-child(1) { width: 28px; }
.parts td:nth-child(2) { width: 102px; }
.parts td:nth-child(3) { width: 102px; }
.parts td:nth-child(4) { width: 24px; }
.parts svg { width: 16px; height: 16px; }
.parts td:nth-child(4) svg { width: 12px; }
.thumb { margin: 30px 0 0 31px; }

.bar { width: 15px; flex: none; display: flex; flex-direction: column; align-items: center; padding: 7px 0 4px; background: #fcfcfc; }
.bar .up { border: 5px solid transparent; border-top: 0; border-bottom: 5px solid #858585; }
.bar .handle { width: 9px; height: 670px; margin: 7px 0 auto; border-radius: 5px; background: #8b8b8b; }
.bar .down { border: 5px solid transparent; border-bottom: 0; border-top: 5px solid #858585; }
.bar.bar-short { width: 16px; }
.bar-short .handle { height: 108px; }

.viewer { flex: 1; display: grid; place-items: center; position: relative; }
.viewer-tools { position: absolute; top: 17px; right: 17px; width: 50px; background: #d0d0d0; color: #444; }
.viewer-tools button { width: 50px; height: 40px; }
.wheel { width: 420px; margin: 0 12px 8px 0; }

.collect { width: 301px; display: flex; border-left: 1px solid #999; }
.collect-body { flex: 1; min-width: 0; overflow: auto; scrollbar-width: none; }
.collect-head { display: flex; align-items: center; height: 61px; border-bottom: 1px solid #d5d5d5; padding: 0 10px 0 10px; }
.collect-head h2 { width: 136px; font-size: 17px; font-weight: 400; }
.save { display: flex; gap: 1px; margin-left: auto; }
.save button { height: 40px; width: 34px; display: grid; place-items: center; background: var(--orange); color: #fff; border-radius: 4px 0 0 4px; }
.save button + button { width: 52px; border-radius: 0 4px 4px 0; }
.modes { display: flex; justify-content: center; gap: 40px; height: 32px; font-size: 13px; }
.modes a { display: flex; align-items: center; gap: 11px; color: #0d8bf2; }
.modes .on { color: #222; }
.modes .on span { text-decoration: underline; }
.entry-head { display: flex; align-items: center; height: 32px; background: #d6d6d6; padding-left: 11px; color: #333; }
.entry-head h3 { flex: 1; min-width: 0; padding-left: 11px; font-size: 12px; font-weight: 400; white-space: nowrap; }
.entry-head button { width: 32px; height: 32px; display: grid; place-items: center; background: var(--orange); color: #fff; }
.fields { display: flex; flex-direction: column; gap: 14px; padding: 8px 15px 15px; }
.field { display: flex; flex-direction: column; color: #333; }
.field label, .label { font-size: 12px; line-height: 20px; color: #666; }
.reference { height: 58px; }
.value { padding-top: 8px; font-size: 15px; line-height: 20px; }
.field input, .field textarea { height: 40px; border-radius: 4px; background: #e3e3e3; padding: 0 10px; color: #555; font-size: 15px; }
.toggle { display: flex; font-size: 13px; }
.toggle button { width: 37px; height: 40px; background: #808080; color: #fff; border-radius: 4px 0 0 4px; }
.toggle .on { background: var(--orange); border-radius: 0 4px 4px 0; width: 38px; }
.qty { display: flex; }
.qty input { flex: 1; min-width: 0; }
.qty span { width: 40px; line-height: 40px; text-align: center; background: var(--orange); color: #fff; border-radius: 0 4px 4px 0; font-size: 13px; }
.comments { gap: 5px; }
.field textarea { height: 84px; resize: vertical; }

.tools { width: 39px; background: var(--navy); }
.tools a { display: grid; place-items: center; height: 48px; color: #fff; }
.tools a:first-child { height: 44px; padding-bottom: 4px; }
.tools a:last-child { height: 66px; }

.edge { width: 53px; display: flex; flex-direction: column; align-items: center; gap: 22px; padding: 12px 0 10px; background: #f7f7f7; }
.edge .plus { margin-top: 5px; }
.edge hr { width: 28px; margin: 0 0 -8px; border: 0; border-top: 1px solid #bbb; }
```
